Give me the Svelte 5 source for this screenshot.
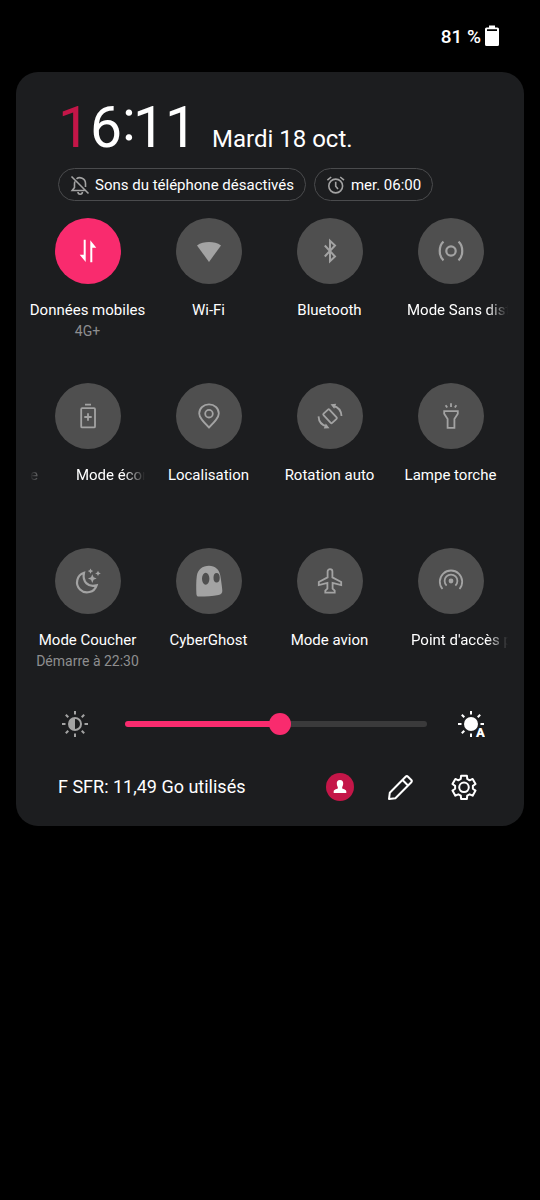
<script>
  const tiles = [
    { icon: 'data', label: 'Données mobiles', sub: '4G+', on: true },
    { icon: 'wifi', label: 'Wi-Fi' },
    { icon: 'bluetooth', label: 'Bluetooth' },
    { icon: 'dnd', label: 'Mode Sans distr', start: 14 },
    { icon: 'battery', label: 'Mode écono', tail: 'e', start: 38 },
    { icon: 'pin', label: 'Localisation' },
    { icon: 'rotate', label: 'Rotation auto' },
    { icon: 'torch', label: 'Lampe torche' },
    { icon: 'moon', label: 'Mode Coucher', sub: 'Démarre à 22:30' },
    { icon: 'ghost', label: 'CyberGhost' },
    { icon: 'plane', label: 'Mode avion' },
    { icon: 'hotspot', label: "Point d'accès p", start: 18 }
  ];

  let active = $state(tiles.map((t) => !!t.on));
  let brightness = $state(514);

  const rays = [0, 45, 90, 135, 180, 225, 270, 315];

  function gearPath(cx, cy, outer, inner) {
    const pts = [];
    for (let k = 0; k < 6; k++) {
      const mid = -90 + k * 60;
      for (const [r, off] of [[inner, -21], [outer, -14], [outer, 14], [inner, 21]]) {
        const a = ((mid + off) * Math.PI) / 180;
        pts.push(`${(cx + r * Math.cos(a)).toFixed(2)} ${(cy + r * Math.sin(a)).toFixed(2)}`);
      }
    }
    return `M${pts.join('L')}Z`;
  }
</script>

{#snippet tileIcon(name)}
  <svg class="glyph" viewBox="0 0 36 36" aria-hidden="true">
    {#if name === 'data'}
      <path class="solid" d="M13.7 6.7h2V29L9.7 21.7h4zM20.3 29.3h2V14.7h4L20.3 7.3z" />
    {:else if name === 'wifi'}
      <path class="solid" d="M6 12.4C9.5 10 13.5 9.1 18 9.1S26.5 10 30 12.4L18 29z" />
    {:else if name === 'bluetooth'}
      <path stroke-width="2" d="M12.8 12.5L23 23.5L18 28.2V7.8L23 12.5L12.8 23.5" />
    {:else if name === 'dnd'}
      <circle cx="18" cy="18" r="4.7" stroke-width="2.2" />
      <path stroke-width="2.2" d="M10.5 8.7C5.5 13 5.5 23 10.5 27.3M25.5 8.7C30.5 13 30.5 23 25.5 27.3" />
    {:else if name === 'battery'}
      <rect x="11.2" y="10.2" width="13.8" height="19.2" rx="1" />
      <path d="M15 6.7h6M18 15.3v7.4M14.3 19h7.4" />
    {:else if name === 'pin'}
      <path d="M18 29.5C12 23.5 8.2 19.5 8.2 15.5a9.8 9.2 0 0 1 19.6 0C27.8 19.5 24 23.5 18 29.5z" />
      <circle cx="18" cy="15.7" r="3.8" />
    {:else if name === 'rotate'}
      <rect x="14" y="12" width="8" height="12.6" rx="1" transform="rotate(-43 18 18.2)" />
      <path d="M21 8C26 9 29.2 13 29.5 18M15 28.4C10 27.4 6.8 23.4 6.5 18.4" />
      <path class="solid" d="M18.5 6.2L24.2 5.8L22.2 10.8zM17.5 30.2L11.8 30.6L13.8 25.6z" />
    {:else if name === 'torch'}
      <path d="M11.2 13.2h13.6v2.6L21.4 21v8.8h-6.8V21l-3.4-5.2z" />
      <path d="M18 5.3v3.6M12.6 7.2l1.6 2.4M23.4 7.2l-1.6 2.4" />
    {:else if name === 'moon'}
      <path stroke-width="2.2" d="M14 9.8A10 10 0 1 0 26.6 22.3C18.5 24.5 12 19 14 9.8z" />
      <path class="solid" d="M22.3 11.2L23.6 14.3L26.7 15.5L23.6 16.8L22.3 19.9L21 16.8L17.9 15.5L21 14.3zM20.5 5.4l.9 1.9 1.9.8-1.9.8-.9 1.9-.9-1.9-1.9-.8 1.900-.8zM28 7.700l.9 1.900 1.900.8-1.900.8-.9 1.900-.9-1.900-1.900-.8 1.900-.8z" />
    {:else if name === 'ghost'}
      <path class="solid" fill-rule="evenodd" d="M5.4 31C5.2 25 5 18.500 5.800 13C6.600 6.500 11.500 2.700 18 2.700C24.200 2.700 28.300 6.500 29.300 12.500C30.200 18 31 23 31.300 27.500C31.500 30 30 31.600 27.500 32C21 33 14 33.700 8 33.600C6.200 33.500 5.500 32.700 5.400 31zM11 15.700a3.700 6 0 1 0 7.400 0a3.700 6 0 1 0-7.400 0zM22.500 14.700a3.100 4.800 0 1 0 6.200 0a3.100 4.800 0 1 0-6.200 0z" />
    {:else if name === 'plane'}
      <path d="M15.6 8.500a2.400 2.400 0 0 1 4.800 0V14.400L29.200 19v3.200L20.600 20v5.600L22.700 27.700v1.900H13.300v-1.900L15.400 25.600V20L6.800 22.200V19L15.600 14.400z" />
    {:else if name === 'hotspot'}
      <circle class="solid" cx="18" cy="18" r="2.400" />
      <path d="M13.600 22.600a6.400 6.400 0 1 1 8.800 0M9.500 26a11.200 11.200 0 1 1 17 0" />
    {/if}
  </svg>
{/snippet}

<div class="screen">
  <header class="status">
    <span>81 %</span>
    <svg class="cell" viewBox="0 0 14 22" aria-hidden="true">
      <path fill="#fff" fill-rule="evenodd" d="M4 0.500h6v2h2.500q1.500 0 1.500 1.500v15.500q0 1.500-1.500 1.500h-11q-1.500 0-1.500-1.500V4q0-1.500 1.500-1.500H4zM2 4.200v1.800h10V4.200z" />
    </svg>
  </header>

  <main class="panel">
    <div class="clock">
      <time class="time"><span class="accent">1</span>6<span class="colon">:</span>11</time>
      <span class="date">Mardi 18 oct.</span>
    </div>

    <div class="chips">
      <button class="chip">
        <svg viewBox="0 0 20 20" aria-hidden="true">
          <path d="M1.500 1.500L18.500 18.500M6.500 3.800C9.500 1.400 15.500 3 15.500 8.500V12M4.800 6.500C4.300 8.500 4.500 10 4.500 12.500L2.200 15.500H14.500M8 17a2.200 2.200 0 0 0 4.400 0" />
        </svg>
        Sons du téléphone désactivés
      </button>
      <button class="chip">
        <svg viewBox="0 0 20 20" aria-hidden="true">
          <circle cx="9.700" cy="11" r="6.900" />
          <path d="M9.700 6.700V11.200L12 14M1.400 5.200L5.200 2M18 5.200L14.200 2" />
        </svg>
        mer. 06:00
      </button>
    </div>

    <div class="tiles">
      {#each tiles as t, i}
        <button class="tile" class:on={active[i]} aria-pressed={active[i]} onclick={() => (active[i] = !active[i])}>
          <span class="disc">{@render tileIcon(t.icon)}</span>
          {#if t.start}
            <span class="label long" class:moving={t.tail}>
              {#if t.tail}<span aria-hidden="true">{t.tail}</span>{/if}
              <span style:margin-left="{t.start}px">{t.label}</span>
            </span>
          {:else}
            <span class="label">{t.label}</span>
          {/if}
          {#if t.sub}<span class="sub">{t.sub}</span>{/if}
        </button>
      {/each}
    </div>

    <div class="brightness">
      <svg viewBox="0 0 28 28" aria-hidden="true">
        <g stroke="#a3a3a3" stroke-width="2">
          {#each rays as r}
            <path d="M14 1v3.500" transform="rotate({r} 14 14)" />
          {/each}
        </g>
        <circle cx="14" cy="14" r="6" fill="none" stroke="#a3a3a3" stroke-width="2" />
        <path fill="#a3a3a3" d="M14 8a6 6 0 0 0 0 12z" />
      </svg>
      <input
        type="range"
        min="0"
        max="1000"
        aria-label="Luminosité"
        bind:value={brightness}
        style:--level="{brightness / 10}%"
      />
      <button class="icon" aria-label="Luminosité automatique">
        <svg viewBox="0 0 28 28" aria-hidden="true">
          <g stroke="#fff" stroke-width="2">
            {#each rays as r}
              {#if r !== 135}<path d="M14 1v3.500" transform="rotate({r} 14 14)" />{/if}
            {/each}
          </g>
          <circle cx="14" cy="14" r="7" fill="#fff" />
          <text x="23.500" y="26.500" text-anchor="middle">A</text>
        </svg>
      </button>
    </div>

    <footer>
      <span class="usage">F SFR: 11,49 Go utilisés</span>
      <button class="icon" aria-label="Utilisateur">
        <svg viewBox="0 0 28 28" aria-hidden="true">
          <circle cx="14" cy="14" r="14" fill="#c41648" />
          <path fill="#fff" d="M14 7c2.200 0 3.400 1.400 3.200 3.800-.1 1.500-.6 2.500-1 3.300v1.500c1.500.8 4.100 1 4.100 3v1.400H7.700v-1.400c0-2 2.600-2.200 4.100-3v-1.500c-.4-.8-.9-1.800-1-3.300C10.600 8.400 11.800 7 14 7z" />
        </svg>
      </button>
      <button class="icon" aria-label="Modifier">
        <svg class="line" viewBox="0 0 28 28" aria-hidden="true">
          <path d="M1 26L1.800 19.800L17.600 3.700Q18.800 2.500 20 3.700L23.300 7Q24.400 8.100 23.300 9.200L7.400 25.200zM14.500 7L20 12.500" />
        </svg>
      </button>
      <button class="icon" aria-label="Paramètres">
        <svg class="line" viewBox="0 0 28 28" aria-hidden="true">
          <path d={gearPath(14, 14.3, 12, 9)} />
          <circle cx="14" cy="14.300" r="4.800" />
        </svg>
      </button>
    </footer>
  </main>
</div>

<style>
  :global(body) {
    background: #000;
  }
  .screen {
    min-height: 100vh;
    box-sizing: border-box;
    padding: 0 16px;
    background: #000;
    color: #fff;
    font-family: Roboto, 'Liberation Sans', sans-serif;
  }
  button {
    margin: 0;
    padding: 0;
    border: 0;
    background: none;
    color: inherit;
    font: inherit;
    cursor: pointer;
  }
  svg {
    display: block;
    flex: none;
  }
  .status {
    display: flex;
    justify-content: flex-end;
    align-items: center;
    gap: 4px;
    height: 72px;
    padding-right: 25px;
    font-size: 19px;
    font-weight: 500;
  }
  .cell {
    width: 14px;
    height: 22px;
  }
  .panel {
    padding: 24px 13px 25px 11px;
    border-radius: 22px;
    background: #1c1d1f;
  }
  .clock {
    display: flex;
    align-items: baseline;
    gap: 15px;
    padding-left: 31px;
    white-space: nowrap;
  }
  .time {
    font-size: 57px;
    line-height: 64px;
  }
  .accent {
    color: #c41648;
  }
  .colon {
    display: inline-block;
    margin-right: -3px;
    line-height: 40px;
    vertical-align: 7px;
  }
  .date {
    font-size: 24px;
    line-height: 28px;
  }
  .chips {
    display: flex;
    gap: 8px;
    margin-top: 8px;
    padding-left: 31px;
  }
  .chip {
    display: flex;
    align-items: center;
    gap: 5px;
    height: 33px;
    padding: 0 11px;
    border: 1px solid #4a4b4d;
    border-radius: 17px;
    font-size: 15px;
    white-space: nowrap;
  }
  .chip svg {
    width: 20px;
    height: 20px;
    fill: none;
    stroke: #a3a3a3;
    stroke-width: 1.6;
  }
  .tiles {
    display: grid;
    grid-template-columns: repeat(4, minmax(0, 1fr));
    grid-auto-rows: 122px;
    row-gap: 43px;
    margin-top: 17px;
  }
  .tile {
    display: flex;
    flex-direction: column;
    align-items: center;
    justify-content: flex-start;
  }
  .disc {
    display: grid;
    flex: none;
    place-items: center;
    width: 66px;
    height: 66px;
    margin-bottom: 16px;
    border-radius: 50%;
    background: #4f4f4f;
    color: #a3a3a3;
  }
  .on .disc {
    background: #f92b6e;
    color: #fff;
  }
  .glyph {
    width: 36px;
    height: 36px;
    fill: none;
    stroke: currentColor;
    stroke-width: 1.8;
  }
  .glyph .solid {
    fill: currentColor;
    stroke: none;
  }
  .label {
    font-size: 15px;
    line-height: 20px;
    white-space: nowrap;
  }
  .long {
    display: flex;
    width: 115px;
    overflow: hidden;
    mask-image: linear-gradient(90deg, #000 94px, transparent);
  }
  .moving {
    mask-image: linear-gradient(90deg, transparent, #000 24px, #000 94px, transparent);
  }
  .sub {
    color: #8e8e8f;
    font-size: 14px;
    line-height: 22px;
    white-space: nowrap;
  }
  .brightness {
    display: flex;
    align-items: center;
    margin-top: 40px;
    padding: 0 26px 0 34px;
  }
  .brightness svg,
  .icon svg {
    width: 28px;
    height: 28px;
  }
  .brightness text {
    fill: #fff;
    stroke: #1c1d1f;
    stroke-width: 3;
    paint-order: stroke;
    font-size: 13px;
    font-weight: 900;
  }
  input {
    flex: 1;
    min-width: 0;
    height: 22px;
    margin: 0 30px 0 36px;
    appearance: none;
    background: none;
  }
  input::-webkit-slider-runnable-track {
    height: 6px;
    border-radius: 3px;
    background: linear-gradient(90deg, #f92b6e var(--level), #3a3a3b var(--level));
  }
  input::-webkit-slider-thumb {
    appearance: none;
    width: 22px;
    height: 22px;
    margin-top: -8px;
    border-radius: 50%;
    background: #f92b6e;
  }
  footer {
    display: flex;
    align-items: center;
    gap: 34px;
    margin-top: 35px;
    padding: 0 33px 0 31px;
  }
  .usage {
    flex: 1;
    font-size: 18px;
    line-height: 28px;
    white-space: nowrap;
  }
  .line {
    fill: none;
    stroke: #fff;
    stroke-width: 2;
    stroke-linejoin: round;
  }
</style>
